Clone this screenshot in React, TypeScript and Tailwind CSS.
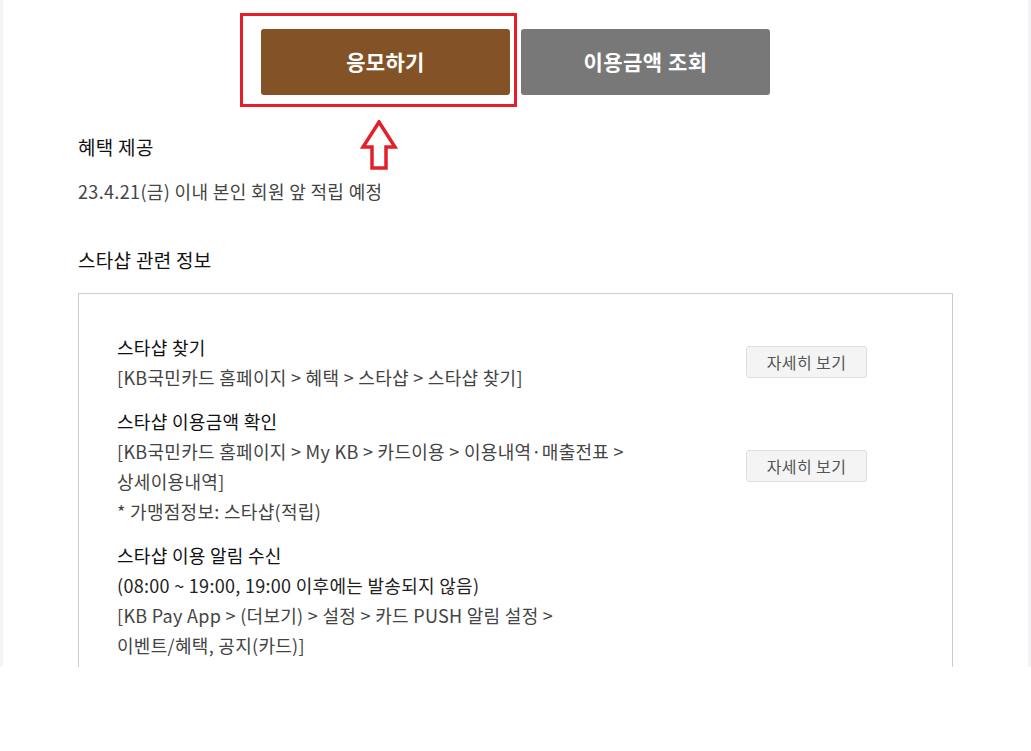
const font = { fontFamily: '"Noto Sans CJK KR", "Noto Sans", sans-serif' };

function DetailButton() {
  return (
    <button className="w-[121px] h-[32px] shrink-0 rounded-[3px] border border-[#dedede] bg-[#f4f4f4] text-[16px] tracking-[0.4px] text-[#555]">
      자세히 보기
    </button>
  );
}

function UpArrow() {
  return (
    <svg width="38" height="52" viewBox="0 0 38 52" className="absolute left-[99px] top-[25px]">
      <polygon
        points="19,2 35,27 26,27 26,48 12,48 12,27 3,27"
        fill="none"
        stroke="#e3202a"
        strokeWidth="3.5"
        strokeLinejoin="miter"
      />
    </svg>
  );
}

export default function App() {
  return (
    <div className="bg-white min-h-[751px]" style={font}>
      <div className="h-[667px] overflow-hidden border-x-[3px] border-[#f4f4f6]">
        {/* Action buttons */}
        <div className="flex justify-center gap-[11px] pt-[29px]">
          <div className="relative">
            <button className="w-[249px] h-[66px] rounded-[3px] bg-[#845227] text-white text-[21px] font-bold tracking-[0.3px]">
              응모하기
            </button>
            <div className="absolute -left-[21px] -top-[16px] -right-[7px] -bottom-[12px] border-[3px] border-[#e3202a] pointer-events-none" />
            <div className="absolute left-0 top-[66px]">
              <UpArrow />
            </div>
          </div>
          <button className="w-[249px] h-[66px] rounded-[3px] bg-[#787878] text-white text-[21px] font-bold tracking-[0.5px]">
            이용금액 조회
          </button>
        </div>

        <div className="px-[75px]">
          <h3 className="mt-[39px] text-[19px] leading-[26px] tracking-[0.3px] text-[#111]">혜택 제공</h3>
          <p className="mt-[18px] text-[18px] leading-[26px] tracking-[0.35px] text-[#444]">23.4.21(금) 이내 본인 회원 앞 적립 예정</p>

          <h3 className="mt-[43px] text-[19px] leading-[26px] tracking-[0.3px] text-[#111]">스타샵 관련 정보</h3>

          <div className="mt-[20px] border border-[#cccccc] pt-[38px] pb-[30px] pl-[38px] pr-[85px] text-[18px] leading-[30px] tracking-[0.3px] text-[#444]">
            <div className="flex items-center justify-between">
              <div>
                <p className="text-[#111]">스타샵 찾기</p>
                <p>[KB국민카드 홈페이지 &gt; 혜택 &gt; 스타샵 &gt; 스타샵 찾기]</p>
              </div>
              <DetailButton />
            </div>

            <div className="mt-[14px] flex items-center justify-between">
              <div>
                <p className="text-[#111]">스타샵 이용금액 확인</p>
                <p>[KB국민카드 홈페이지 &gt; My KB &gt; 카드이용 &gt; 이용내역·매출전표 &gt;</p>
                <p>상세이용내역]</p>
                <p>* 가맹점정보: 스타샵(적립)</p>
              </div>
              <DetailButton />
            </div>

            <div className="mt-[14px]">
              <p className="text-[#111]">스타샵 이용 알림 수신</p>
              <p className="text-[#222]">(08:00 ~ 19:00, 19:00 이후에는 발송되지 않음)</p>
              <p>[KB Pay App &gt; (더보기) &gt; 설정 &gt; 카드 PUSH 알림 설정 &gt;</p>
              <p>이벤트/혜택, 공지(카드)]</p>
            </div>
          </div>
        </div>
      </div>
    </div>
  );
}
